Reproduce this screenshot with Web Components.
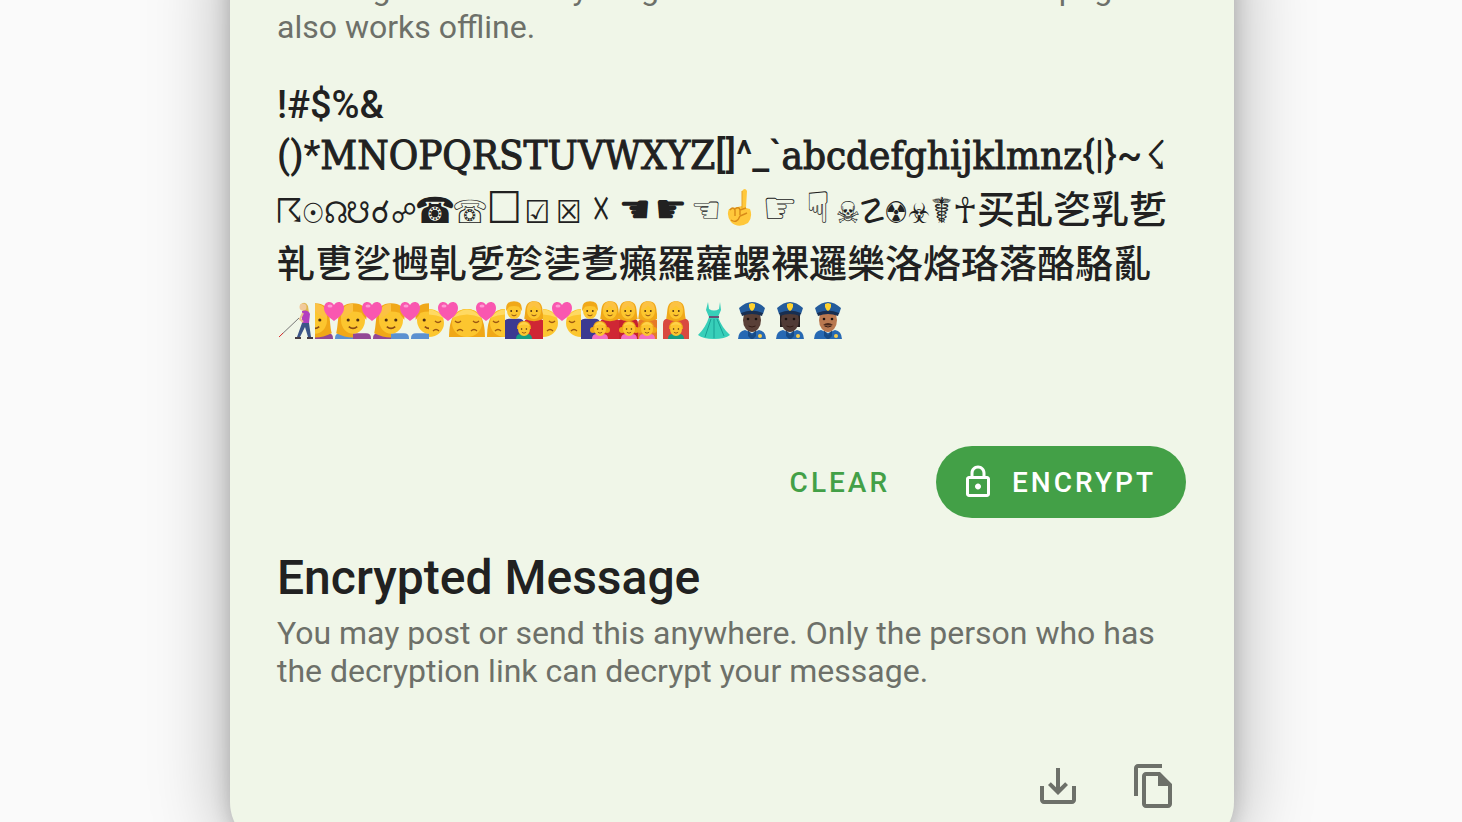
<!DOCTYPE html>
<html lang="en">
<head>
<meta charset="utf-8">
<meta name="viewport" content="width=device-width, initial-scale=1">
<title>Encrypt a message</title>
<style>
  html, body { height: 100%; }
  body { margin: 0; background: #fafafa; color: #212121; font-family: Roboto, "Liberation Sans", sans-serif; overflow: hidden; }
</style>
</head>
<body>
<crypto-card>
  <help-text>message or file. Everything is done on this device. This page also works offline.</help-text>
  <message-editor></message-editor>
  <action-bar>
    <pill-button>Clear</pill-button>
    <pill-button raised icon="lock">Encrypt</pill-button>
  </action-bar>
  <section-title>Encrypted Message</section-title>
  <help-text>You may post or send this anywhere. Only the person who has the decryption link can decrypt your message.</help-text>
  <tool-bar>
    <icon-button icon="download" label="Download"></icon-button>
    <icon-button icon="copy" label="Copy"></icon-button>
  </tool-bar>
</crypto-card>

<script>
const ICONS = {
  lock: '<path fill-rule="evenodd" d="M18 8h-1V6c0-2.76-2.24-5-5-5S7 3.24 7 6v2H6c-1.1 0-2 .9-2 2v10c0 1.1.9 2 2 2h12c1.1 0 2-.9 2-2V10c0-1.1-.9-2-2-2zM9 6c0-1.66 1.34-3 3-3s3 1.34 3 3v2H9V6zm9 14H6V10h12v10zm-6-3c1.1 0 2-.9 2-2s-.9-2-2-2-2 .9-2 2 .9 2 2 2z"/>',
  download: '<path d="M19 12v7H5v-7H3v7c0 1.1.9 2 2 2h14c1.1 0 2-.9 2-2v-7h-2zm-6 .67l2.59-2.58L17 11.5l-5 5-5-5 1.41-1.41L11 12.67V3h2z"/>',
  copy: '<path fill-rule="evenodd" d="M16 1H4c-1.1 0-2 .9-2 2v14h2V3h12V1zm-1 4H8c-1.1 0-2 .9-2 2v14c0 1.1.9 2 2 2h11c1.1 0 2-.9 2-2V11l-6-6zM8 21V7h6v5h5v9H8z"/>'
};
const icon = (name) => `<svg viewBox="0 0 24 24" aria-hidden="true" fill="currentColor">${ICONS[name]}</svg>`;

class Base extends HTMLElement {
  constructor() { super(); this.attachShadow({ mode: 'open' }); }
  connectedCallback() { this.shadowRoot.innerHTML = this.render(); }
}

customElements.define('crypto-card', class extends Base {
  render() { return `<style>
    :host { display: block; box-sizing: border-box; max-width: 1004px; margin: -78px auto 0; position: relative; left: 1px;
      padding: 48px 48px 32px 47px; background: #f0f6e8; border-radius: 48px;
      box-shadow: 0 0 20px 0 rgba(0,0,0,.18), 0 0 76px 4px rgba(0,0,0,.28); }
    </style><slot></slot>`; }
});

customElements.define('help-text', class extends Base {
  render() { return `<style>
    :host { display: block; color: #6d7069; font-size: 32px; line-height: 38px; }
    p { margin: 0; }
    </style><p><slot></slot></p>`; }
});

customElements.define('section-title', class extends Base {
  render() { return `<style>
    :host { display: block; margin: 28px 0 4px; }
    h2 { margin: 0; font-size: 48px; line-height: 64px; font-weight: 500; }
    </style><h2><slot></slot></h2>`; }
});

customElements.define('action-bar', class extends Base {
  render() { return `<style>
    :host { display: flex; justify-content: flex-end; align-items: center; gap: 16px; }
    </style><slot></slot>`; }
});

customElements.define('pill-button', class extends Base {
  render() {
    const name = this.getAttribute('icon');
    return `<style>
    :host { display: block; }
    button { display: flex; align-items: center; gap: 16px; height: 72px; padding: 0 30px; border: 0; border-radius: 36px;
      background: none; color: #43a047; font: 500 28px Roboto, "Liberation Sans", sans-serif; letter-spacing: 3px; text-transform: uppercase; }
    :host([raised]) button { background: #43a047; color: #fff; padding-left: 24px; }
    svg { width: 36px; height: 36px; }
    </style><button type="button">${name ? icon(name) : ''}<span><slot></slot></span></button>`; }
});

customElements.define('tool-bar', class extends Base {
  render() { return `<style>
    :host { display: flex; justify-content: flex-end; gap: 32px; margin-top: 64px; }
    </style><slot></slot>`; }
});

customElements.define('icon-button', class extends Base {
  render() { return `<style>
    :host { display: block; }
    button { display: grid; place-items: center; width: 64px; height: 64px; padding: 0; border: 0; background: none; color: #6d7069; }
    svg { width: 48px; height: 48px; }
    </style><button type="button" aria-label="${this.getAttribute('label')}">${icon(this.getAttribute('icon'))}</button>`; }
});

/* Emoji artwork, each drawn in a 38 by 38 box. */
const SKIN = '#fcc62f', HAIR = '#f0a818';
const heart = (x, y) => `<path transform="translate(${x} ${y})" fill="#f957b0" d="M0 10C-4 7-10 3-10-3-10-10-2.500-11 0-6 2.500-11 10-10 10-3 10 3 4 7 0 10z"/><ellipse cx="${x - 4}" cy="${y - 5}" rx="2.500" ry="1.500" fill="#ff9bd3"/>`;
const face = (x, y, r, skin = SKIN) => `<ellipse cx="${x}" cy="${y}" rx="${r}" ry="${r * 1.15}" fill="${skin}"/>
  <circle cx="${x - r * .4}" cy="${y}" r="${r * .13}" fill="#4b2c12"/><circle cx="${x + r * .4}" cy="${y}" r="${r * .13}" fill="#4b2c12"/>
  <path d="M${x - r * .35} ${y + r * .55}q${r * .35} ${r * .3} ${r * .7} 0" fill="none" stroke="#8a4b14" stroke-width="${r * .14}"/>`;
const body = (x, top, w, c) => `<path d="M${x - w} 39V${top + 5}q0-5 5-5h${2 * w - 10}q5 0 5 5V39z" fill="${c}"/>`;
const fringe = (x, y, r) => `<path d="M${x - r} ${y - r * .1}Q${x - r * .3} ${y - r * .4} ${x} ${y - r * .8}Q${x + r * .3} ${y - r * .4} ${x + r} ${y - r * .1}Q${x + r} ${y - r * 1.35} ${x} ${y - r * 1.35}Q${x - r} ${y - r * 1.35} ${x - r} ${y - r * .1}z" fill="#fcc243"/>`;
const woman = (x, y, r, c, w) => `${body(x, y + r * 1.1, w, c)}<path d="M${x} ${y - r * 1.4}C${x - r * 1.5} ${y - r * 1.4} ${x - r * 1.1} ${y} ${x - r * 1.4} ${y + r * 1.1}Q${x} ${y + r * 1.8} ${x + r * 1.4} ${y + r * 1.1}C${x + r * 1.1} ${y} ${x + r * 1.5} ${y - r * 1.4} ${x} ${y - r * 1.4}z" fill="${HAIR}"/>${face(x, y, r)}${fringe(x, y, r)}`;
const man = (x, y, r, c, w) => `${body(x, y + r * 1.1, w, c)}${face(x, y, r)}<path d="M${x - r * 1.1} ${y}Q${x - r * 1.3} ${y - r * 1.4} ${x} ${y - r * 1.4}Q${x + r * 1.3} ${y - r * 1.4} ${x + r * 1.1} ${y}L${x + r * .7} ${y - r * .6}Q${x} ${y - r * .8} ${x - r * .7} ${y - r * .6}z" fill="${HAIR}"/>`;
const couple = (a, b) => `${a}${b}${heart(19, 10)}`;
const kisser = (x, long) => `${long ? `<path d="M${x - 18} 36Q${x - 18} 8 ${x} 8T${x + 18} 36z" fill="${HAIR}"/>` : ''}<ellipse cx="${x}" cy="22" rx="15" ry="14" fill="${SKIN}"/><path d="M${x - 15} 17Q${x} 0 ${x + 15} 17Q${x} 10 ${x - 15} 17z" fill="#ffda62"/><path d="M${x - 12} 20q3 3 6 0M${x + 6} 20q3 3 6 0M${x - 10} 30q3-3 6 0M${x + 4} 30q3-3 6 0" fill="none" stroke="#9b5812" stroke-width="1.300"/>`;
const kid = (x, girl) => `${body(x, 33, 8, girl ? '#f46fc0' : '#169d82')}${girl ? `<circle cx="${x - 7}" cy="29" r="3" fill="${HAIR}"/><circle cx="${x + 7}" cy="29" r="3" fill="${HAIR}"/>` : ''}<path d="M${x - 7} 28q0-8 7-8t7 8z" fill="${HAIR}"/>${face(x, 28, 6)}<path d="M${x - 6} 25q6-8 12 0q-6-3-12 0z" fill="#ffd24a"/>`;
const officer = (skin, long, tache) => `${long ? '<path d="M9 11h20v15H9z" fill="#272021"/>' : ''}<path d="M5 39q0-9 7-10l7 3 7-3q7 1 7 10z" fill="#2769b3"/><path d="M15 29l4 5 4-5v6l-4 4-4-4z" fill="#174b86"/><ellipse cx="19" cy="19" rx="9" ry="12" fill="${skin}"/><circle cx="15" cy="18" r="1.300" fill="#171010"/><circle cx="23" cy="18" r="1.300" fill="#171010"/><path d="M15.500 25q3.500 2 7 0" stroke="#351c15" fill="none"/>${tache ? '<path d="M14 24q5-4 10 0-5 1-10 0z" fill="#4a281b"/>' : ''}<path d="M8 13l-2-6Q19-5 32 7l-2 6q-11-4-22 0z" fill="#245c9c"/><path d="M8 12q11-5 22 0l-1 3q-10-4-20 0z" fill="#182e50"/><path d="M16 3l3-1 3 1v3q-1 3-3 4-2-1-3-4z" fill="#ffd22e"/><circle cx="27" cy="35" r="2" fill="#f5cc4c"/>`;
const ART = {
  walker: '<path d="M22 17L2 36" stroke="#777" stroke-width="1"/><path d="M2 36l4-4" stroke="#d33"/><path d="M23 4q5-5 8 1l1 7-6-2z" fill="#dfb74e"/><circle cx="26" cy="6" r="3.500" fill="#f1c99a"/><path d="M25 10q6-2 8 3l-1 9h-7z" fill="#b23fc0"/><path d="M26 12l-3 6 3 3" stroke="#eabf91" stroke-width="2" fill="none"/><path d="M25 22h7l2 14h-3l-3-10-5 10h-3z" fill="#3b5588"/><path d="M18 36h6v2h-6zM30 36h6v2h-6z" fill="#453b42"/>',
  c1: couple(woman(0, 19, 12, '#924895', 18), woman(38, 19, 12, '#5b91d0', 18)),
  c2: couple(man(0, 19, 12, '#924895', 18), woman(38, 19, 12, '#924895', 18)),
  c3: couple(man(0, 19, 12, '#5b91d0', 18), man(38, 19, 12, '#5b91d0', 18)),
  k1: couple(kisser(0), kisser(38, true)),
  k2: couple(kisser(0, true), kisser(38, true)),
  k3: couple(kisser(0), kisser(38)),
  f1: man(9, 10, 7, '#3c3a91', 10) + woman(29, 10, 7, '#cf2734', 10) + kid(19),
  f2: man(9, 10, 7, '#3c3a91', 10) + woman(29, 10, 7, '#cf2734', 10) + kid(19, true),
  f3: woman(9, 10, 7, '#c5202f', 10) + woman(29, 10, 7, '#e67a28', 10) + kid(10, true) + kid(28, true),
  f4: woman(19, 10, 7, '#d94940', 13) + kid(19),
  dress: '<path d="M13 1l1 7q5 3 10 0l1-7 1 8-3 7q4 11 12 18-5 4-16 4T3 34q8-8 11-18l-3-7z" fill="#37cfb9"/><path d="M14 16h10" stroke="#675278" stroke-width="2"/><path d="M16 18l-6 18M19 18v19M22 18l7 17" stroke="#199f94" fill="none"/>',
  p1: officer('#5a4037', false), p2: officer('#513b36', true), p3: officer('#b97850', false, true),
  point: '<path d="M20 3q3-4 5 0l-1 17 4 1q3 8-2 14-10 6-17-1-5-7-2-13l13-3z" fill="#ffc83b"/><path d="M20 3v17" stroke="#e7a127"/><path d="M8 22q3-4 5 0v6M13 21q4-3 5 1v5M18 22l6-2M9 32q6 4 9-4l7-3" fill="none" stroke="#d88a18" stroke-width="1.400"/>'
};
customElements.define('emoji-glyph', class extends Base {
  render() { return `<style>
    :host { display: block; width: 38px; height: 38px; flex: none; }
    svg { display: block; width: 100%; height: 100%; overflow: hidden; }
    </style><svg viewBox="0 0 38 38" aria-hidden="true">${ART[this.getAttribute('name')]}</svg>`; }
});

/* Pictographs: character, advance and text size. */
const SYMBOLS = [
  ['☈', 24, 34], ['☉', 24, 28], ['☊', 22, 30], ['☋', 22, 30], ['☌', 23, 32], ['☍', 24, 28], ['☎', 38, 36], ['☏', 32, 32], ['☐', 36, 44],
  ['☑', 31, 32], ['☒', 32, 32], ['☓', 32, 40], ['☚', 36, 40], ['☛', 36, 40], ['☜', 34, 38], ['point', 36], ['☞', 42, 44], ['☟', 34, 44],
  ['☠', 26, 30], ['☡', 23, 34], ['☢', 24, 30], ['☣', 22, 28], ['☤', 23, 36], ['☥', 24, 36]
];
const EMOJI = ['walker', 'c1', 'c2', 'c3', 'k1', 'k2', 'f1', 'k3', 'f2', 'f3', 'f4', 'dress', 'p1', 'p2', 'p3'];

customElements.define('message-editor', class extends Base {
  render() {
    const symbols = SYMBOLS.map(([c, w, s]) => s
      ? `<span class="s" style="width:${w}px;font-size:${s}px">${c}</span>`
      : `<span class="s pic" style="width:${w}px"><emoji-glyph name="${c}"></emoji-glyph></span>`).join('');
    return `<style>
    :host { display: block; margin: 34px 0 94px; }
    .box { outline: none; font: 400 40px "DejaVu Serif Condensed", "DejaVu Serif", serif; font-stretch: condensed; }
    .line { display: flex; align-items: center; height: 54px; white-space: nowrap; }
    .short { height: 50px; }
    .slab { -webkit-text-stroke: 1px currentColor; }
    .sans { font: 500 38px Roboto, "Liberation Sans", sans-serif; }
    .cjk { font: 500 38px "Noto Sans CJK SC", "Noto Sans CJK JP", sans-serif; line-height: 54px; }
    .symbols { align-items: baseline; }
    .s { display: flex; flex: none; justify-content: center; font-family: "DejaVu Sans", sans-serif; font-weight: 400; line-height: 54px; }
    .pic { align-self: center; }
    .emoji { height: 64px; }
    </style>
    <div class="box" role="textbox" aria-multiline="true" aria-label="Message" contenteditable="true" spellcheck="false">
      <div class="line short"><span class="sans">!#$%&amp;</span></div>
      <div class="line short"><span class="sans">()*</span><span class="slab">MNOPQRSTUVWXYZ</span><span class="sans">[]^_\`</span><span class="slab">abcdefghijklmnz</span><span class="sans">{|}~</span><span class="s" style="width:28px;font-size:40px">☇</span></div>
      <div class="line symbols">${symbols}<span class="cjk">买乱乲乳乴</span></div>
      <div class="line"><span class="cjk">乵乶乷乸乹乺乻乼乽癩羅蘿螺裸邏樂洛烙珞落酪駱亂</span></div>
      <div class="line emoji">${EMOJI.map((n) => `<emoji-glyph name="${n}"></emoji-glyph>`).join('')}</div>
    </div>`; }
});
</script>
</body>
</html>
